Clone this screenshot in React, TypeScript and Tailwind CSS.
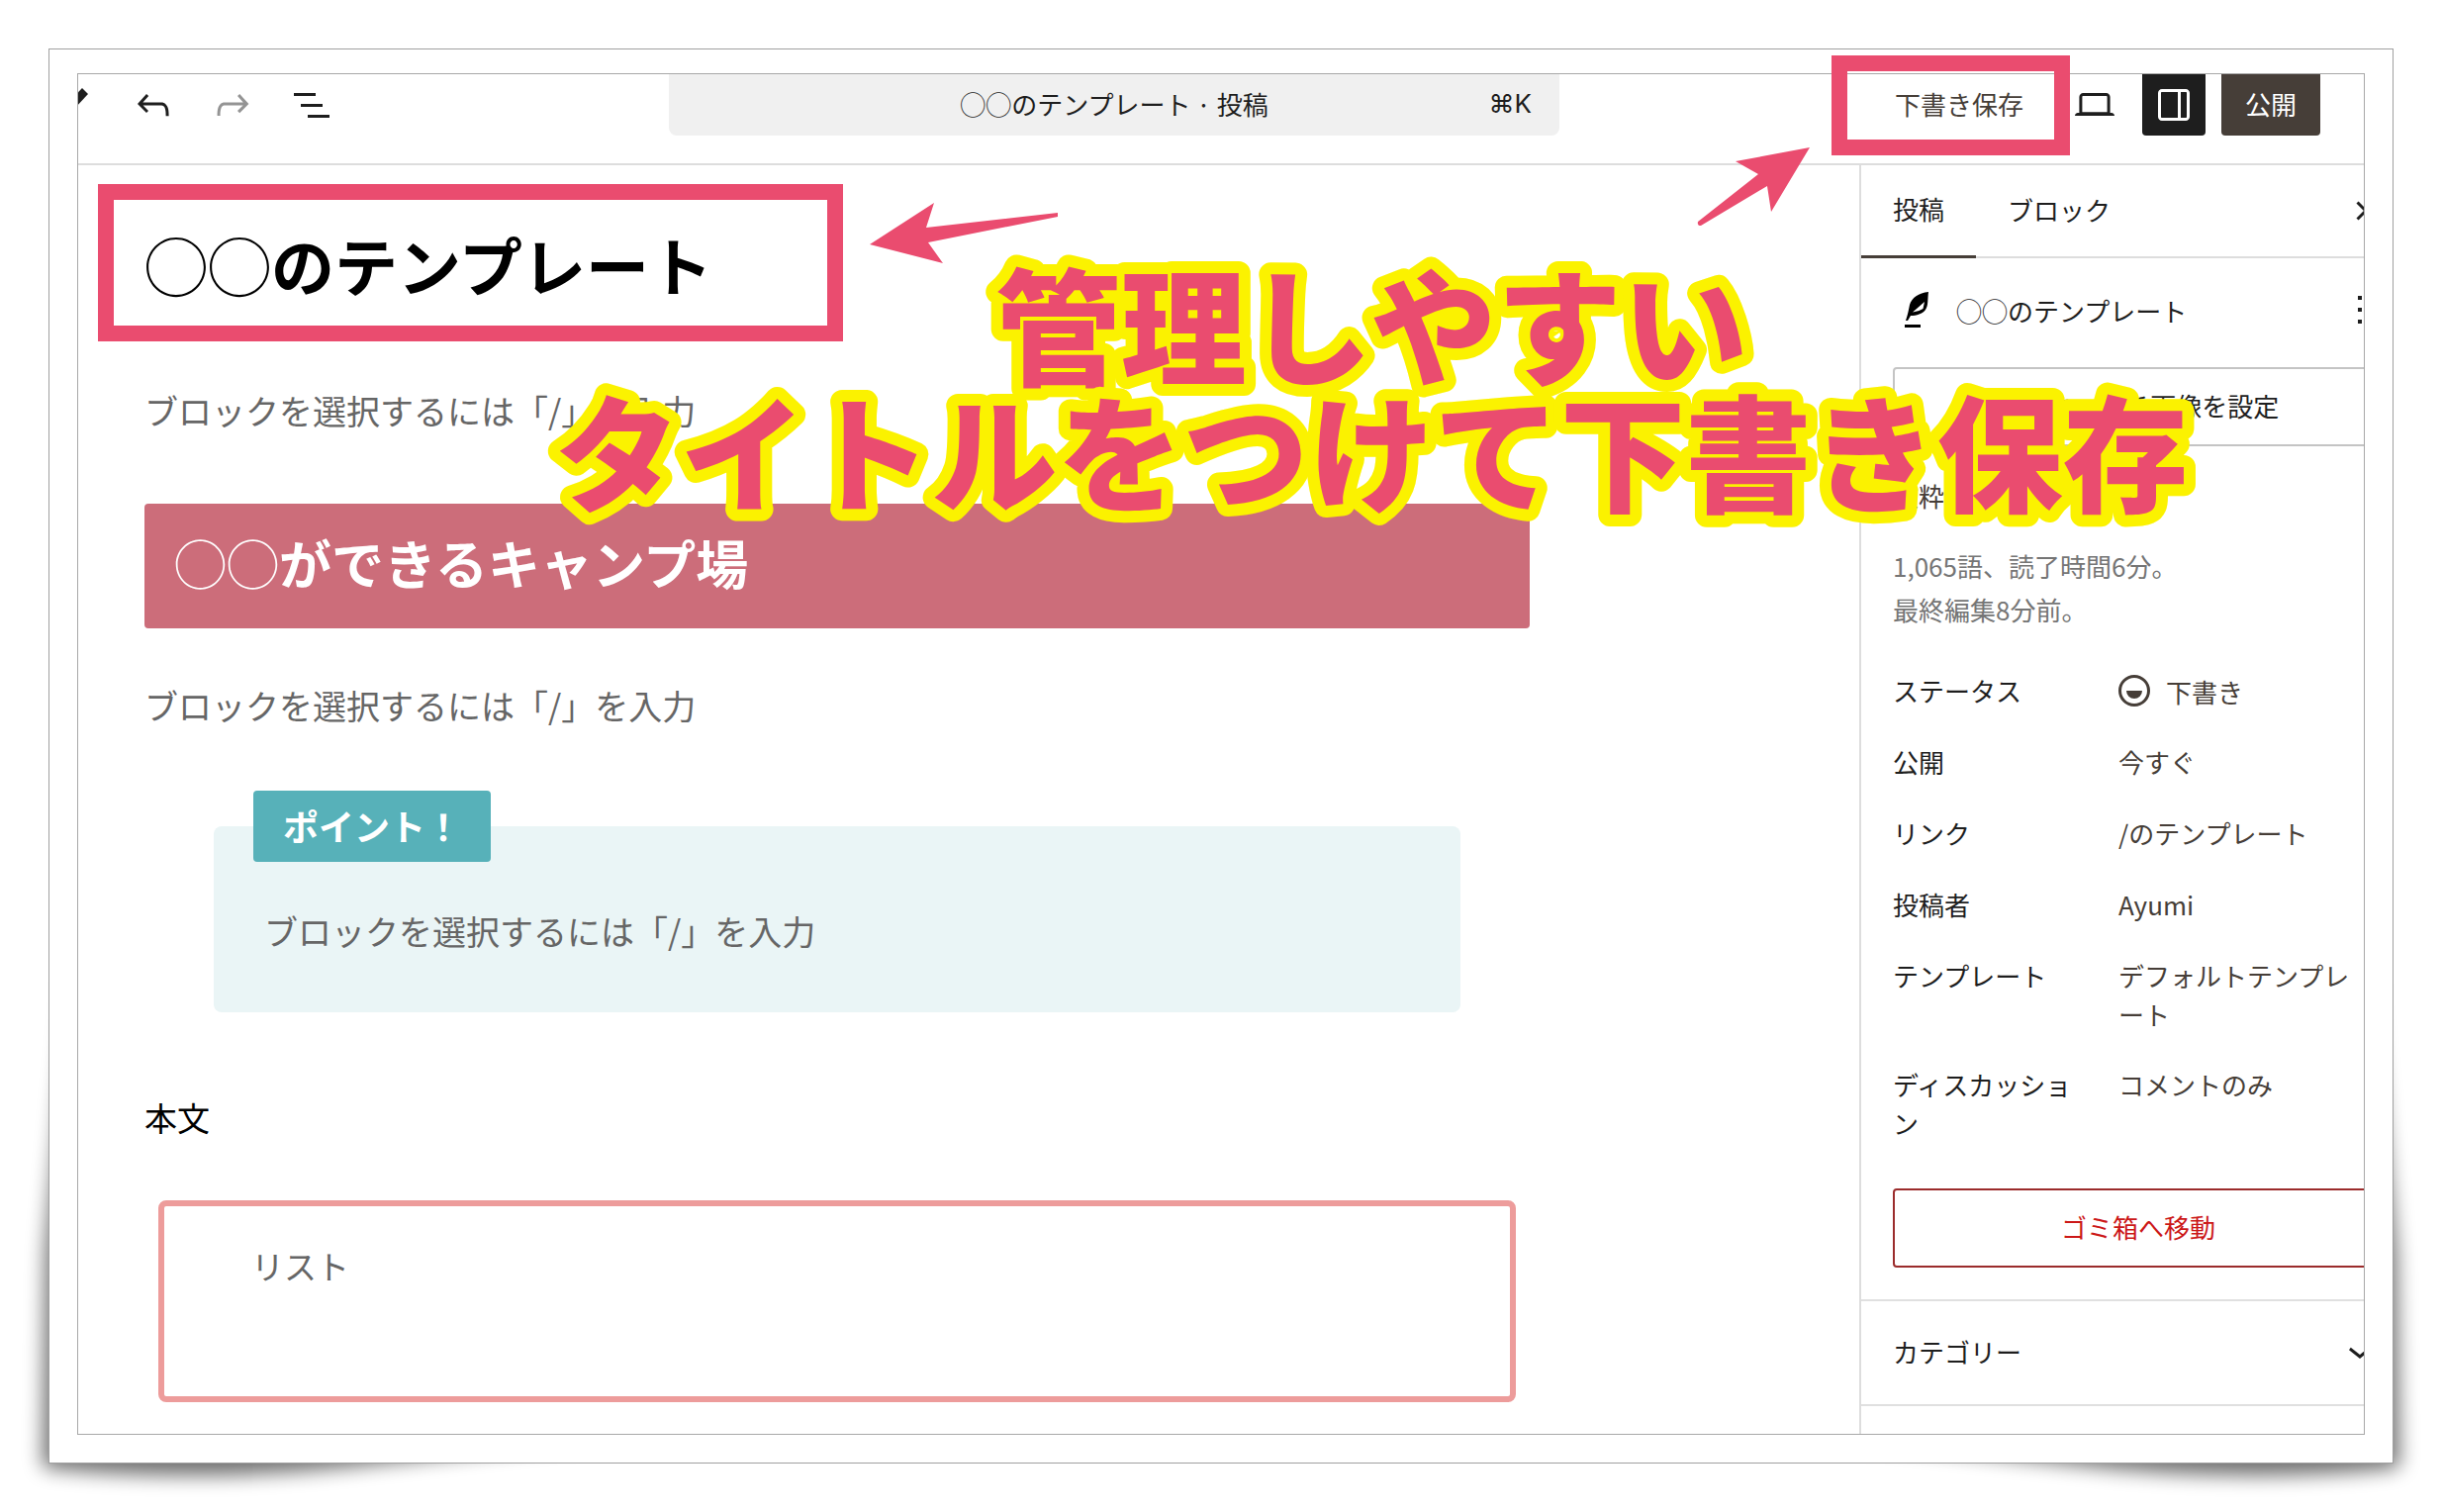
import type { ReactNode } from 'react';

const ICONS = {
  undo: 'M18.3 11.7c-.6-.6-1.4-.9-2.3-.9H6.7l2.9-3.3-1.1-1-4.5 5L8.5 16l1-1-2.7-2.7H16c.5 0 .9.2 1.3.5 1 1 1 3.4 1 4.5v.3h1.5v-.2c0-1.5 0-4.3-1.5-5.7z',
  redo: 'M15.6 6.5l-1.1 1 2.9 3.3H8c-.9 0-1.7.3-2.3.9-1.4 1.5-1.4 4.2-1.4 5.6v.2h1.5v-.3c0-1.1 0-3.5 1-4.5.3-.3.7-.5 1.3-.5h9.2L14.5 15l1.1 1.1 4.6-4.6-4.6-5z',
  list: 'M3 6h11v1.5H3V6Zm3.5 5.5h11V13h-11v-1.5ZM21 17H10v1.5h11V17Z',
  desktop:
    'M20.5 16h-.7V8c0-1.1-.9-2-2-2H6.2c-1.1 0-2 .9-2 2v8h-.7c-.8 0-1.5.7-1.5 1.5h20c0-.8-.7-1.5-1.5-1.5zM5.7 8c0-.3.2-.5.5-.5h11.6c.3 0 .5.2.5.5v7.6H5.7V8z',
  drawer:
    'M18 4H6c-1.1 0-2 .9-2 2v12c0 1.1.9 2 2 2h12c1.1 0 2-.9 2-2V6c0-1.1-.9-2-2-2zm-4 14.5H6c-.3 0-.5-.2-.5-.5V6c0-.3.2-.5.5-.5h8v13zm4.5-.5c0 .3-.2.5-.5.5h-2.5v-13H18c.3 0 .5.2.5.5v12z',
  more: 'M13 19h-2v-2h2v2zm0-6h-2v-2h2v2zm0-6h-2V5h2v2z',
  close:
    'M12 13.06l3.712 3.713 1.061-1.06L13.061 12l3.712-3.712-1.06-1.06L12 10.938 8.288 7.227l-1.061 1.06L10.939 12l-3.712 3.712 1.06 1.061L12 13.061z',
  draft:
    'M12 18.5a6.5 6.5 0 1 1 0-13 6.5 6.5 0 0 1 0 13ZM4 12a8 8 0 1 1 16 0 8 8 0 0 1-16 0Zm8 4a4 4 0 0 0 4-4H8a4 4 0 0 0 4 4Z',
  chevron: 'M17.5 11.6L12 16l-5.5-4.4.9-1.2L12 14l4.5-3.6 1 1.2z',
  pen: 'M16 3.5 19 6.5 11 15 8 12Z',
};

function Icon({ name }: { name: keyof typeof ICONS }) {
  return (
    <svg viewBox="0 0 24 24" className="size-12 shrink-0 fill-current" aria-hidden="true">
      <path d={ICONS[name]} fillRule="evenodd" />
    </svg>
  );
}

function ToolButton({ name, label, className = '' }: { name: keyof typeof ICONS; label: string; className?: string }) {
  return (
    <button type="button" aria-label={label} className={`flex h-[62px] w-16 shrink-0 items-center justify-center ${className}`}>
      <Icon name={name} />
    </button>
  );
}

function Row({ label, children }: { label: string; children: ReactNode }) {
  return (
    <div className="flex min-h-16 items-start">
      <dt className="w-[228px] shrink-0 py-3 pr-8 text-[#1e1e1e] [line-break:anywhere]">{label}</dt>
      <dd className="w-[250px] py-3 text-[#463e38] [line-break:anywhere]">{children}</dd>
    </div>
  );
}

function Prompt() {
  return <p className="text-[34px] leading-[48px] text-[#666]">ブロックを選択するには「/」を入力</p>;
}

// Lifted paper corner: the frame covers all but the outer rim
function CornerShadow({ className }: { className: string }) {
  return (
    <svg viewBox="0 0 640 900" className={`pointer-events-none absolute -bottom-12 h-[900px] w-[640px] ${className}`} aria-hidden="true">
      <defs>
        <filter id="soft" x="-20%" y="-20%" width="140%" height="140%">
          <feGaussianBlur stdDeviation="10" />
        </filter>
      </defs>
      <path d="M96 60C78 300 58 480 45 640L42 856Q200 874 380 852L600 828L600 700L160 60Z" fill="#000" opacity=".56" filter="url(#soft)" />
    </svg>
  );
}

function TopBar() {
  return (
    <header className="flex h-[92px] shrink-0 items-start border-b-2 border-[#ddd] text-[#1e1e1e]">
      <div className="-ml-9 flex w-[633px] shrink-0 gap-4">
        <ToolButton name="pen" label="ツール" />
        <ToolButton name="undo" label="元に戻す" />
        <ToolButton name="redo" label="やり直す" className="text-[#949494]" />
        <ToolButton name="list" label="ドキュメント概観" />
      </div>
      <button type="button" className="relative h-[62px] w-[900px] rounded-b-lg bg-[#f0f0f0] pb-1 text-center">
        <span>◯◯のテンプレート · 投稿</span>
        <kbd className="absolute inset-y-0 right-7 flex items-center pb-1 font-[Inter,'Noto_Sans_CJK_JP',sans-serif]">⌘K</kbd>
      </button>
      <div className="ml-auto flex shrink-0 gap-4 pr-11">
        <button type="button" className="h-[62px] px-6 pb-1 text-[#463e38]">下書き保存</button>
        <ToolButton name="desktop" label="表示" />
        <ToolButton name="drawer" label="設定" className="rounded-b bg-[#1e1e1e] text-white" />
        <button type="button" className="h-[62px] rounded-b bg-[#463e38] px-6 pb-1 text-white">公開</button>
      </div>
    </header>
  );
}

function Editor() {
  return (
    <main className="min-w-0 flex-1 pr-[333px] pl-[67px]">
      <h1 className="mt-[51px] text-[64px] leading-[96px] font-bold text-black">
        <span className="font-medium">◯◯</span>のテンプレート
      </h1>
      <div className="mt-[77px]">
        <Prompt />
      </div>
      <h2 className="mt-[70px] rounded bg-[#cc6d7a] px-[30px] pt-5 pb-7 text-[53px] leading-[78px] font-bold text-white">
        <span className="font-normal">◯◯</span>ができるキャンプ場
      </h2>
      <div className="mt-[54px]">
        <Prompt />
      </div>
      <section className="relative mx-[70px] mt-[98px] rounded-lg bg-[#eaf5f6] px-[51px] pt-[82px] pb-[58px]">
        <strong className="absolute -top-9 left-10 h-[72px] rounded bg-[#57b1b9] px-[30px] text-[36px] leading-[70px] text-white">
          ポイント！
        </strong>
        <Prompt />
      </section>
      <p className="mt-[82px] text-[33px] leading-[48px] text-black">本文</p>
      <div className="mx-[14px] mt-[60px] h-[204px] rounded-lg border-6 border-[#ed9c9b] px-[88px] pt-9">
        <p className="text-[33px] leading-[48px] text-[#666]">リスト</p>
      </div>
    </main>
  );
}

function Sidebar() {
  return (
    <aside className="w-[510px] shrink-0 border-l-2 border-[#ddd] text-[#1e1e1e]">
      {/* The panel is wider than the visible strip */}
      <div className="w-[560px]">
        <div className="flex h-[94px] items-stretch border-b-2 border-[#ddd]">
          <button type="button" className="-mb-0.5 border-b-3 border-[#463e38] px-8 pb-1">投稿</button>
          <button type="button" className="px-8 pb-1">ブロック</button>
          <button type="button" aria-label="閉じる" className="mr-[26px] ml-auto">
            <Icon name="close" />
          </button>
        </div>
        <div className="flex flex-col px-8 pt-7 pb-8">
          <div className="flex h-12 items-center">
            <svg viewBox="0 0 24 36" className="ml-3 h-9 w-6" aria-hidden="true">
              <path d="M24 0C14 1 7 6 5 13C4 18 3 23 1 29L3 29L6 24C12 24 18 22 21 18C24 14 23 7 24 0Z" />
              <path d="M20 10 18.5 17Q14 20 8 20.5Z" fill="#fff" />
              <rect y="33" width="16" height="3" />
            </svg>
            <span className="ml-7 flex-1">◯◯のテンプレート</span>
            <button type="button" aria-label="操作">
              <Icon name="more" />
            </button>
          </div>
          <button type="button" className="mt-[34px] h-20 rounded border-2 border-[#c4c4c4] pb-1">アイキャッチ画像を設定</button>
          <a href="#excerpt" className="mt-[30px] self-start text-[#463e38]">抜粋を追加…</a>
          <p className="mt-[30px] leading-[44px] text-[#757575]">
            1,065語、読了時間6分。
            <br />
            最終編集8分前。
          </p>
          <dl className="mt-7 flex flex-col gap-2">
            <Row label="ステータス">
              <span className="-my-1 -ml-2 flex items-center gap-2">
                <Icon name="draft" />
                下書き
              </span>
            </Row>
            <Row label="公開">今すぐ</Row>
            <Row label="リンク">/のテンプレート</Row>
            <Row label="投稿者">Ayumi</Row>
            <Row label="テンプレート">デフォルトテンプレート</Row>
            <Row label="ディスカッション">コメントのみ</Row>
          </dl>
          <button type="button" className="mt-[35px] h-20 rounded border-2 border-[#9b2c2c] pb-1 text-[#cc1818]">ゴミ箱へ移動</button>
        </div>
        <button type="button" className="flex h-[108px] w-full items-center border-y-2 border-[#e0e0e0] px-8 pb-1">
          <span className="flex-1 text-left">カテゴリー</span>
          <Icon name="chevron" />
        </button>
      </div>
    </aside>
  );
}

function Annotations() {
  return (
    <div className="pointer-events-none absolute inset-0">
      <div className="absolute top-[136px] left-[49px] h-[159px] w-[753px] border-16 border-[#ea4c6f]" />
      <div className="absolute top-[6px] right-[326px] h-[101px] w-[241px] border-16 border-[#ea4c6f]" />
      <svg viewBox="0 0 190 62" className="absolute top-[155px] left-[829px] h-[62px] w-[190px] fill-[#ea4c6f]" aria-hidden="true">
        <path d="M0 42 65 0 57 25 190 10V14L59 40 74 61Z" />
      </svg>
      <svg viewBox="0 0 114 80" className="absolute top-[99px] right-[589px] h-[80px] w-[114px] fill-[#ea4c6f]" aria-hidden="true">
        <path d="M114 0 39 14 62 27 1 75Q0 79 4 79L71 39 75 65Z" />
      </svg>
      <svg
        viewBox="0 0 1664 280"
        className="absolute top-[218px] left-[504px] h-[280px] w-[1664px] overflow-visible fill-[#ea4c6f] stroke-[#fbf200] stroke-[24px] text-[127px] font-black [paint-order:stroke] [stroke-linejoin:round]"
      >
        <text x="832" y="112" textAnchor="middle">
          管理しやすい
        </text>
        <text x="832" y="240" textAnchor="middle">
          タイトルをつけて下書き保存
        </text>
      </svg>
    </div>
  );
}

export default function App() {
  return (
    <div lang="ja" className="flex min-h-screen bg-white p-[49px] font-['Noto_Sans_CJK_JP',sans-serif] text-[26px] leading-[39px]">
      <div className="relative flex flex-1">
        <CornerShadow className="-left-12" />
        <CornerShadow className="-right-12 -scale-x-100" />
        <div className="relative flex min-w-0 flex-1 border border-[#a0a0a0] bg-white px-7 pt-6 pb-7">
          <div className="flex min-w-0 flex-1 flex-col overflow-hidden border border-[#a8a8a8]">
            <TopBar />
            <div className="flex flex-1">
              <Editor />
              <Sidebar />
            </div>
          </div>
          <Annotations />
        </div>
      </div>
    </div>
  );
}
